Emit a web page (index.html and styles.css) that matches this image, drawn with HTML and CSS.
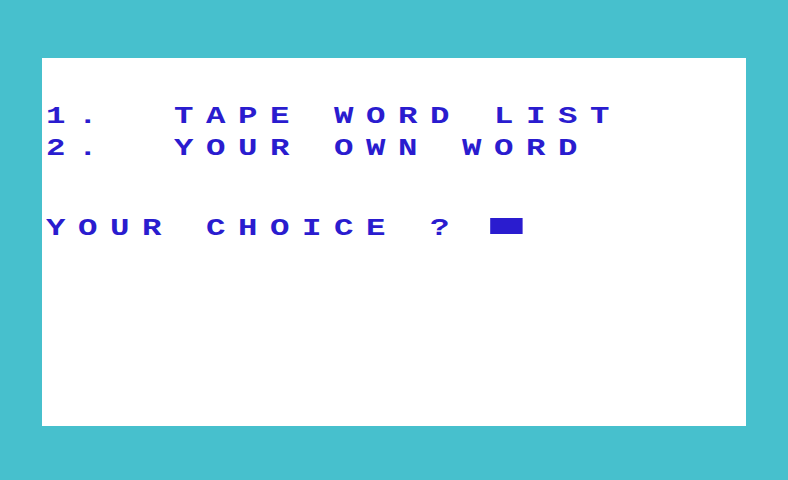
FILE: index.html
```html
<!DOCTYPE html>
<html lang="en">
<head>
    <meta charset="UTF-8">
    <meta name="viewport" content="width=device-width, initial-scale=1.0">
    <title>Word Game</title>
    <link rel="stylesheet" href="styles.css">
</head>
<body>
    <div class="screen">
        <div class="row"></div>
        <div class="row"></div>
        <div class="row"></div>
        <div class="row"><span class="text">1.  TAPE WORD LIST</span></div>
        <div class="row"></div>
        <div class="row"><span class="text">2.  YOUR OWN WORD</span></div>
        <div class="row"></div>
        <div class="row"></div>
        <div class="row"></div>
        <div class="row"></div>
        <div class="row"><span class="text">YOUR CHOICE ? <span class="cursor"></span></span></div>
    </div>
</body>
</html>
```

FILE: styles.css
```css
* {
    margin: 0;
    padding: 0;
    box-sizing: border-box;
}
body {
    width: 100%;
    height: 100vh;
    background: #47c0cd;
    padding: 58px 42px 0 42px;
}
/* 22 columns x 23 rows, each cell 32 x 16 */
.screen {
    width: 704px;
    height: 368px;
    background: #ffffff;
    color: #2a1ccf;
    font-family: "Liberation Mono", monospace;
    font-size: 24px;
    font-weight: bold;
}
.row {
    height: 16px;
    line-height: 21px;
    white-space: pre;
}
.text {
    display: inline-block;
    height: 16px;
    padding-left: 3px;
    letter-spacing: 9.304px;
    transform: scaleX(1.35);
    transform-origin: left top;
}
.cursor {
    display: inline-block;
    width: 23.704px;
    height: 16px;
    margin-left: -3px;
    vertical-align: top;
    background: #2a1ccf;
}
```
